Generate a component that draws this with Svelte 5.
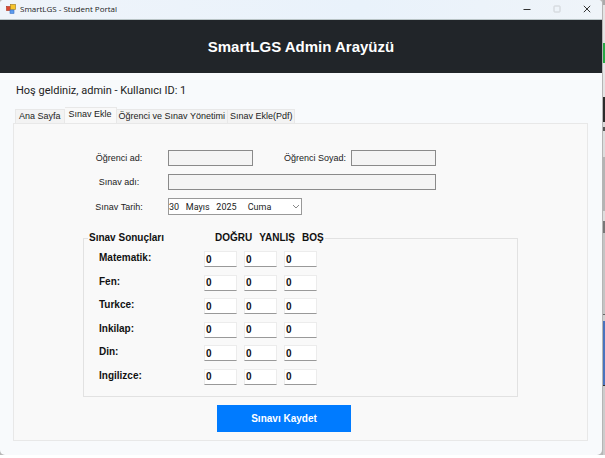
<script>
  const tabs = ['Ana Sayfa', 'Sınav Ekle', 'Öğrenci ve Sınav Yönetimi', 'Sınav Ekle(Pdf)'];
  let active = $state(1);
  const kinds = ['DOĞRU', 'YANLIŞ', 'BOŞ'];
  let results = $state(
    ['Matematik', 'Fen', 'Turkce', 'Inkilap', 'Din', 'Ingilizce'].map((name) => ({
      name,
      values: ['0', '0', '0']
    }))
  );
  let firstName = $state('');
  let lastName = $state('');
  let examName = $state('');
</script>

<div class="desktop">
  <div class="window">
    <div class="titlebar">
      <svg class="app-icon" viewBox="0 0 10 10" aria-hidden="true">
        <rect x="0.5" y="2.5" width="4" height="4" fill="#d9482f" stroke="#a8321f" stroke-width="0.6" />
        <rect x="4.5" y="0.5" width="5" height="5" fill="#f7c52c" stroke="#a98524" stroke-width="0.7" />
        <rect x="4" y="6" width="4" height="3.4" fill="#5c9cf0" stroke="#3971c4" stroke-width="0.6" />
      </svg>
      <span class="caption">SmartLGS - Student Portal</span>
      <button class="win" aria-label="Simge durumuna küçült">
        <svg viewBox="0 0 8 8"><path d="M0.5 4.5h7" stroke="#333" /></svg>
      </button>
      <button class="win" aria-label="Ekranı kapla" disabled>
        <svg viewBox="0 0 8 8"><rect x="1" y="1" width="6" height="6" rx="0.5" fill="none" stroke="#ccd0d4" /></svg>
      </button>
      <button class="win" aria-label="Kapat">
        <svg viewBox="0 0 8 8"><path d="M0.8 0.8l6.4 6.4M7.2 0.8l-6.4 6.4" stroke="#333" /></svg>
      </button>
    </div>

    <header><h1>SmartLGS Admin Arayüzü</h1></header>

    <main>
      <p class="welcome">Hoş geldiniz, admin - Kullanıcı ID: 1</p>

      <div class="tabs" role="tablist">
        {#each tabs as tab, i}
          <button role="tab" aria-selected={i === active} class:active={i === active} onclick={() => (active = i)}>{tab}</button>
        {/each}
      </div>

      <form class="panel" onsubmit={(e) => e.preventDefault()}>
        <div class="fields">
          <label for="first">Öğrenci ad:</label>
          <input id="first" class="flat" bind:value={firstName} />
          <label for="last" class="second">Öğrenci Soyad:</label>
          <input id="last" class="flat" bind:value={lastName} />
          <label for="exam">Sınav adı:</label>
          <input id="exam" class="flat wide" bind:value={examName} />
          <label for="date">Sınav Tarih:</label>
          <div class="date">
            <select id="date">
              <option>30&nbsp;&nbsp; Mayıs&nbsp;&nbsp; 2025&nbsp;&nbsp;&nbsp;&nbsp; Cuma</option>
            </select>
            <svg viewBox="0 0 8 5" aria-hidden="true"><path d="M1 1l3 3 3-3" fill="none" stroke="#888" /></svg>
          </div>
        </div>

        <fieldset>
          <legend>
            <span class="name">Sınav Sonuçları</span>
            {#each kinds as kind}<span>{kind}</span>{/each}
          </legend>
          <div class="rows">
            {#each results as row}
              <div class="row">
                <label for={row.name}>{row.name}:</label>
                {#each row.values as _, k}
                  <input
                    id={k === 0 ? row.name : undefined}
                    aria-label={k === 0 ? undefined : `${row.name} ${kinds[k]}`}
                    bind:value={row.values[k]}
                  />
                {/each}
              </div>
            {/each}
          </div>
        </fieldset>

        <button class="save" type="submit">Sınavı Kaydet</button>
      </form>
    </main>
  </div>
  <div class="behind"></div>
</div>

<style>
  :global(body) {
    background: #fff;
  }
  .desktop {
    display: grid;
    grid-template-columns: 1fr 3px;
    background: #b8b8b8;
    font-family: 'Liberation Sans', Arial, sans-serif;
    font-size: 9px;
    line-height: 12px;
    color: #222;
  }
  .desktop * {
    box-sizing: border-box;
  }
  button,
  input,
  select {
    font: inherit;
    color: inherit;
    margin: 0;
  }
  .window {
    background: #f8fafc;
    border-radius: 4px 4px 5px 5px;
    overflow: hidden;
  }
  .behind {
    background: linear-gradient(
      #aaa 0 5px, #e4e4e4 5px 43px, #28a745 43px 63px, #e4e4e4 63px 97px,
      #2b2b2b 97px 122px, #d8d8d8 122px 127px, #555 127px 131px, #ddd 131px 157px,
      #b4b4b4 157px 211px, #ddd 211px 221px, #777 221px 233px, #c4c4c4 233px 314px,
      #666 314px 315px, #d0d0d0 315px 321px, #4a73bd 321px 385px, #333 385px 386px,
      #ccc 386px
    );
    border-left: 1px solid #b5b5b5;
  }
  .titlebar {
    display: flex;
    align-items: center;
    height: 20px;
    padding: 0 0 2px 6px;
    background: linear-gradient(90deg, #eff4fa, #e9f2fb 60%, #eff4f9);
    border-bottom: 1px solid #b9c4c6;
  }
  .app-icon {
    width: 10px;
    height: 10px;
  }
  .caption {
    flex: 1;
    padding-left: 4px;
    font-family: 'Open Sans', 'Noto Sans', sans-serif;
    font-size: 8px;
  }
  .win {
    display: grid;
    place-items: center;
    width: 30px;
    height: 18px;
    padding: 0;
    border: 0;
    background: none;
  }
  .win svg {
    width: 8px;
    height: 8px;
  }
  header {
    display: grid;
    place-items: center;
    height: 53px;
    background: #212529;
    color: #fff;
  }
  h1 {
    margin: 0;
    font-size: 15px;
    line-height: 20px;
  }
  main {
    padding: 10px 14px 14px 13px;
  }
  .welcome {
    margin: 0 0 8px 3px;
    font-family: Roboto, sans-serif;
    font-size: 11px;
    line-height: 16px;
  }
  .tabs {
    display: flex;
    align-items: flex-end;
    height: 16px;
    padding-left: 2px;
  }
  .tabs button {
    height: 14px;
    padding: 0 2px;
    border: 1px solid #e8e8e8;
    border-bottom: 0;
    border-left-width: 0;
    background: #f3f3f3;
    line-height: 13px;
    white-space: nowrap;
  }
  .tabs button:first-child {
    padding: 0 3px;
    border-left-width: 1px;
  }
  .tabs .active {
    height: 16px;
    padding: 0 4px 2px;
    background: #f9f9f9;
  }
  .panel {
    padding: 26px 69px 8px;
    border: 1px solid #e8e8e8;
    background: #f9f9f9;
  }
  .fields {
    display: grid;
    grid-template-columns: 69px 85px 88px 85px;
    gap: 8px 5px;
    align-items: center;
    padding-left: 11px;
  }
  .fields label {
    width: 50px;
    text-align: center;
    white-space: nowrap;
  }
  .fields .second {
    width: auto;
    text-align: right;
  }
  .flat {
    width: 100%;
    height: 16px;
    padding: 0 3px;
    border: 1px solid #8a8a8a;
    border-radius: 0;
    background: #f4f4f4;
  }
  .wide {
    grid-column: 2 / 5;
  }
  .date {
    grid-column: 2 / 5;
    position: relative;
    width: 134px;
    height: 17px;
  }
  .date select {
    display: block;
    width: 100%;
    height: 100%;
    padding: 0 14px 0 0;
    border: 1px solid #999;
    border-radius: 0;
    appearance: none;
    background: #fff;
    font-family: Roboto, sans-serif;
  }
  .date svg {
    position: absolute;
    right: 2px;
    top: 6px;
    width: 8px;
    height: 5px;
    pointer-events: none;
  }
  fieldset {
    min-width: 0;
    margin: 17px 0 0;
    padding: 7px 15px 11px;
    border: 1px solid #e2e2e2;
    font-size: 10px;
    font-weight: bold;
    color: #111;
  }
  legend {
    display: flex;
    gap: 7px;
    margin-left: -11px;
    padding: 0 1px;
  }
  .name {
    width: 119px;
  }
  .rows {
    display: flex;
    flex-direction: column;
    justify-content: space-between;
    height: 134px;
  }
  .row {
    display: grid;
    grid-template-columns: 98px 33px 33px 33px;
    column-gap: 7px;
  }
  .row label {
    padding-top: 1px;
  }
  .row input {
    width: 100%;
    height: 16px;
    padding: 0 1px;
    border: 1px solid #ececec;
    border-bottom-color: #999;
    border-radius: 0;
    background: #fff;
  }
  .save {
    display: block;
    width: 134px;
    height: 27px;
    margin: 8px 0 0 134px;
    padding: 0;
    border: 0;
    background: #007bff;
    color: #fff;
    font-size: 10px;
    font-weight: bold;
  }
</style>
